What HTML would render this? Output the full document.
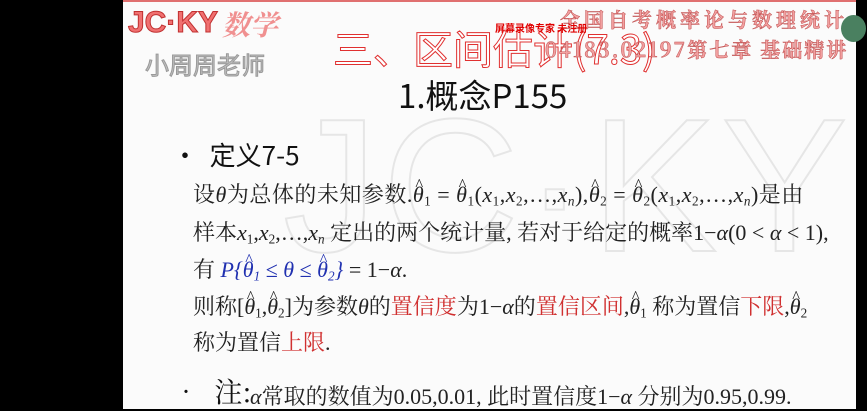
<!DOCTYPE html>
<html><head><meta charset="utf-8"><style>
html,body{margin:0;padding:0}
body{width:867px;height:407px;background:#000;position:relative;overflow:hidden;font-family:"Liberation Serif","Noto Serif CJK SC",serif}
.slide{position:absolute;left:123px;top:0;width:733px;height:407px;background:#fbfbfb;border-top:2px solid #e07070;overflow:hidden}
.a{position:absolute;white-space:nowrap}
.wm{color:transparent;-webkit-text-stroke:2px #e6e6e6;font-family:"Liberation Sans",sans-serif;font-size:190px;left:160px;top:75px;letter-spacing:4px}
.t{font-size:22px;color:#222;font-family:"Liberation Serif","Noto Serif CJK SC",serif;letter-spacing:0px}
.r{color:#d03030}.b{color:#2030b0;font-style:italic}
i{font-style:italic}
.h{position:relative;font-style:italic;display:inline-block}
.h::before{content:"^";position:absolute;left:0.15em;top:-0.4em;font-style:normal;font-size:0.75em}
sub{font-size:0.6em;vertical-align:-0.25em}
</style></head><body>
<div class="slide"><div class="a wm">JC·KY</div></div>
<div class="a" style="left:128px;top:6px;font:bold 30px 'Liberation Sans',sans-serif;color:#f07070;-webkit-text-stroke:1px #c03030">JC·KY</div>
<div class="a" style="left:222px;top:4px;font:italic bold 28px 'Noto Serif CJK SC',serif;color:#f09090">数学</div>
<div class="a" style="left:145px;top:46px;font:24px 'Noto Sans CJK SC',sans-serif;color:#c0c0c0;-webkit-text-stroke:1px #999">小周周老师</div>
<div class="a" style="left:333px;top:18px;font:40px 'Noto Sans CJK SC',sans-serif;color:#fff;-webkit-text-stroke:1px #e03030">三、区间估计(7.3)</div>
<div class="a" style="left:560px;top:4px;font:bold 20px 'Noto Serif CJK SC',serif;color:#f2a0a0;-webkit-text-stroke:0.5px #c05050;letter-spacing:4px">全国自考概率论与数理统计</div>
<div class="a" style="left:545px;top:34px;font:bold 20px 'Noto Serif CJK SC',serif;color:#f2a0a0;-webkit-text-stroke:0.5px #c05050;letter-spacing:2px">04183.02197第七章 基础精讲</div>
<div class="a" style="left:495px;top:20px;font:bold 10px 'Noto Sans CJK SC',sans-serif;color:#e00000">屏幕录像专家 未注册</div>
<div class="a" style="left:841px;top:15px;width:25px;height:27px;border-radius:50%;background:#4a8060"></div>
<div class="a" style="left:398px;top:70px;font:33px 'Noto Sans CJK SC',sans-serif;color:#111">1.概念P155</div>
<div class="a" style="left:172px;top:136px;font:26px 'Noto Sans CJK SC',sans-serif;color:#111">•&nbsp; 定义7-5</div>
<div class="a t" style="left:193px;top:178px;letter-spacing:0.5px">设<i>θ</i>为总体的未知参数.<span class="h">θ</span><sub>1</sub> = <span class="h">θ</span><sub>1</sub>(<i>x</i><sub>1</sub>,<i>x</i><sub>2</sub>,…,<i>x<sub>n</sub></i>),<span class="h">θ</span><sub>2</sub> = <span class="h">θ</span><sub>2</sub>(<i>x</i><sub>1</sub>,<i>x</i><sub>2</sub>,…,<i>x<sub>n</sub></i>)是由</div>
<div class="a t" style="left:193px;top:216px">样本<i>x</i><sub>1</sub>,<i>x</i><sub>2</sub>,…,<i>x<sub>n</sub></i> 定出的两个统计量, 若对于给定的概率1−<i>α</i>(0 &lt; <i>α</i> &lt; 1),</div>
<div class="a t" style="left:193px;top:253px">有<span class="b"> P{<span class="h">θ</span><sub>1</sub> ≤ θ ≤ <span class="h">θ</span><sub>2</sub>}</span> = 1−<i>α</i>.</div>
<div class="a t" style="left:193px;top:290px">则称[<span class="h">θ</span><sub>1</sub>,<span class="h">θ</span><sub>2</sub>]为参数<i>θ</i>的<span class="r">置信度</span>为1−<i>α</i>的<span class="r">置信区间</span>,<span class="h">θ</span><sub>1</sub> 称为置信<span class="r">下限</span>,<span class="h">θ</span><sub>2</sub></div>
<div class="a t" style="left:193px;top:326px">称为置信<span class="r">上限</span>.</div>
<div class="a" style="left:172px;top:371px;font:28px 'Noto Serif CJK SC',serif;color:#111">•&nbsp; 注:</div>
<div class="a t" style="left:250px;top:380px"><i>α</i>常取的数值为0.05,0.01, 此时置信度1−<i>α</i> 分别为0.95,0.99.</div>
</body></html>
